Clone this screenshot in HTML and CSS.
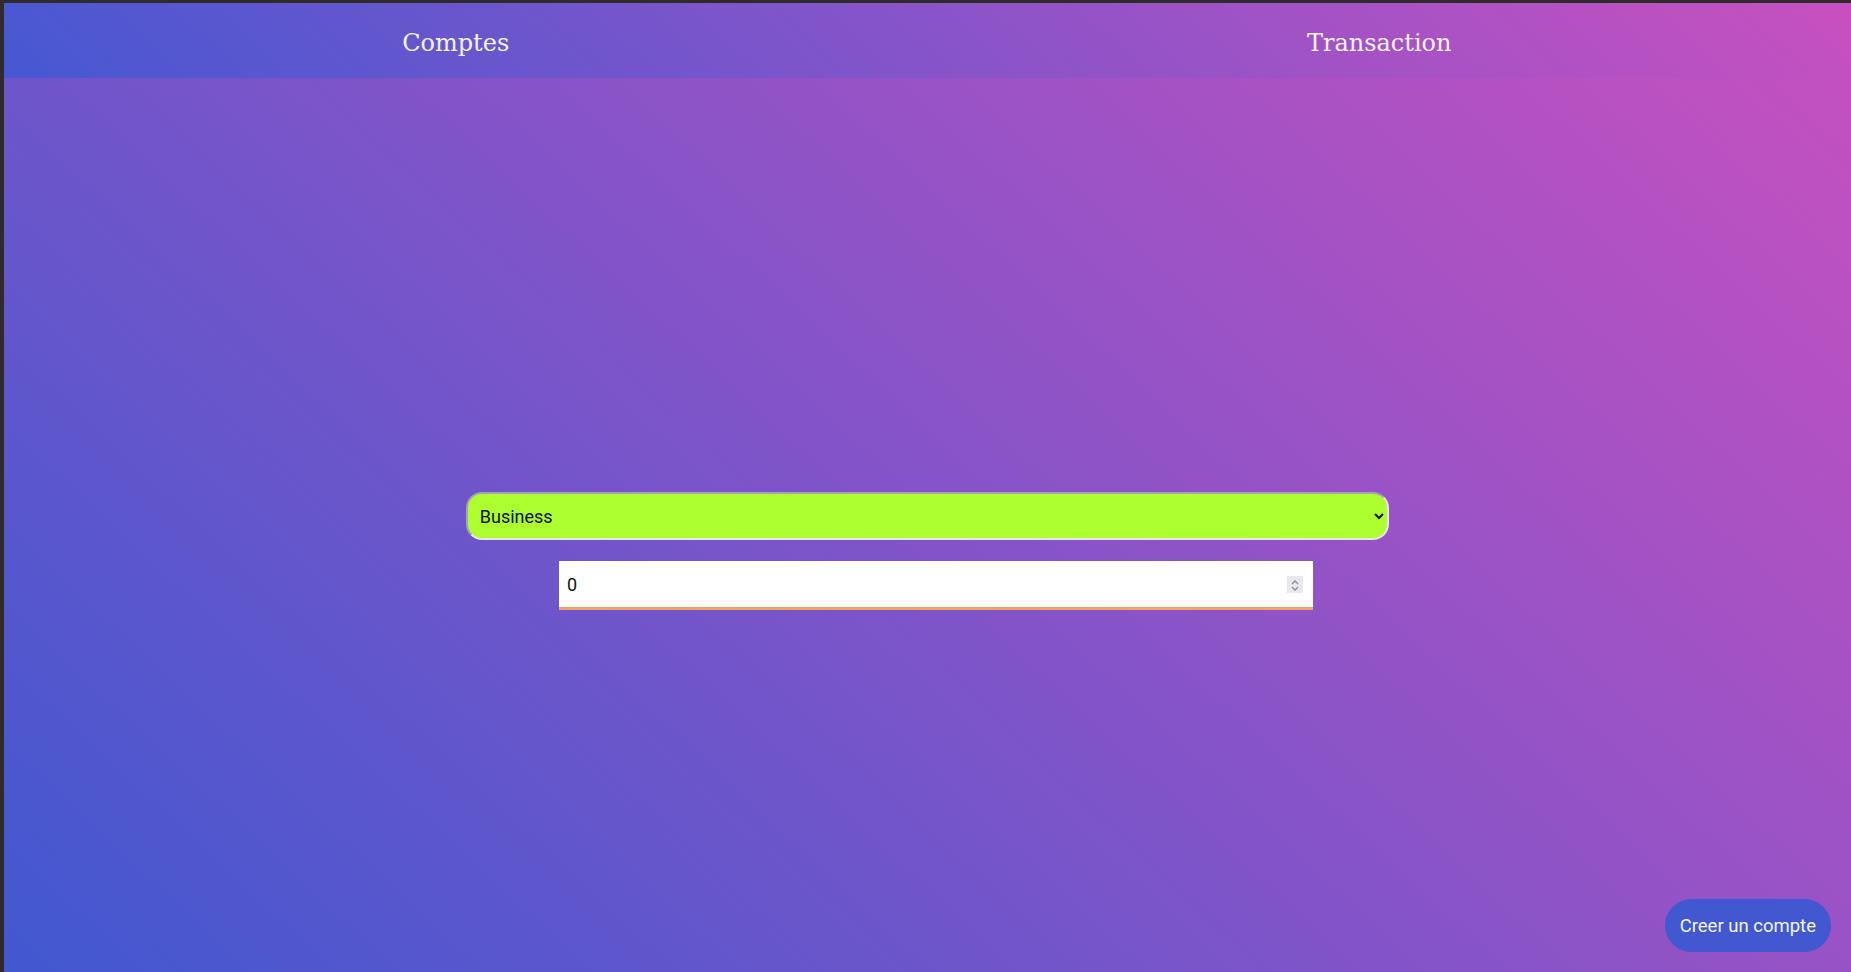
FILE: index.html
```html
<!DOCTYPE html>
<html lang="fr">
<head>
<meta charset="utf-8">
<title>Comptes</title>
<link rel="stylesheet" href="styles.css">
</head>
<body>
<div class="screen">
  <nav class="topnav">
    <a class="navlink" href="#">Comptes</a>
    <a class="navlink" href="#">Transaction</a>
  </nav>
  <main class="content">
    <select class="account-type">
      <option selected>Business</option>
      <option>Personnel</option>
      <option>Epargne</option>
    </select>
    <div class="amount-field">
      <input class="amount-input" type="number" value="0">
      <span class="spinner">
        <svg width="16" height="17" viewBox="0 0 16 17">
          <polyline points="5,8 8,5 11,8" fill="none" stroke="#8d8d99" stroke-width="1.3"/>
          <polyline points="5,11 8,14 11,11" fill="none" stroke="#8d8d99" stroke-width="1.3"/>
        </svg>
      </span>
    </div>
  </main>
  <button class="create-btn" type="button">Creer un compte</button>
</div>
</body>
</html>
```

FILE: styles.css
```css
html, body {
  height: 100%;
}

body {
  margin: 0;
  background: #2e2b2a;
}

.screen {
  margin: 3px 0 0 4px;
  min-height: calc(100vh - 3px);
  box-sizing: border-box;
  background: linear-gradient(43deg, #4158d0 0%, #c850c0 100%);
}

.topnav {
  display: grid;
  grid-template-columns: 1fr 1fr;
  height: 75px;
  background: linear-gradient(43deg, #4658d2 0%, #c850c0 100%);
}

.navlink {
  display: flex;
  align-items: center;
  justify-content: center;
  padding: 4px 20px 0 0;
  font-family: "DejaVu Serif", serif;
  font-size: 24px;
  color: #f3f1ff;
  text-decoration: none;
}

.content {
  display: flex;
  flex-direction: column;
  align-items: center;
  gap: 21px;
  padding-top: 414px;
}

.account-type {
  width: 50%;
  height: 48px;
  box-sizing: border-box;
  border: 2px solid;
  border-color: #a9a2b7 #e6e6e6 #e6e6e6 #a9a2b7;
  border-radius: 16px;
  background-color: #adff2f;
  color: #111;
  font-family: Roboto, "Noto Sans", sans-serif;
  font-size: 18px;
  padding: 0 8px;
  outline: none;
}

.amount-field {
  display: flex;
  align-items: center;
  width: 754px;
  height: 49px;
  box-sizing: border-box;
  margin-left: 17px;
  padding: 0 8px;
  background: #ffffff;
  border-bottom: 3px solid #f4a460;
}

.amount-input {
  flex: 1;
  min-width: 0;
  border: none;
  outline: none;
  padding: 0;
  background: transparent;
  color: #111;
  font-family: Roboto, "Noto Sans", sans-serif;
  font-size: 18px;
  -moz-appearance: textfield;
}

.amount-input::-webkit-inner-spin-button,
.amount-input::-webkit-outer-spin-button {
  -webkit-appearance: none;
  margin: 0;
}

.spinner {
  display: flex;
  width: 16px;
  height: 17px;
  margin-right: 2px;
  margin-top: 1px;
  background: #e9e9ed;
}

.create-btn {
  position: fixed;
  right: 20px;
  bottom: 20px;
  height: 53px;
  padding: 0 15px;
  border: none;
  border-radius: 27px;
  background: #4158d0;
  color: #f4f4ff;
  font-family: Roboto, "Noto Sans", sans-serif;
  font-size: 18.5px;
  cursor: pointer;
}
```
